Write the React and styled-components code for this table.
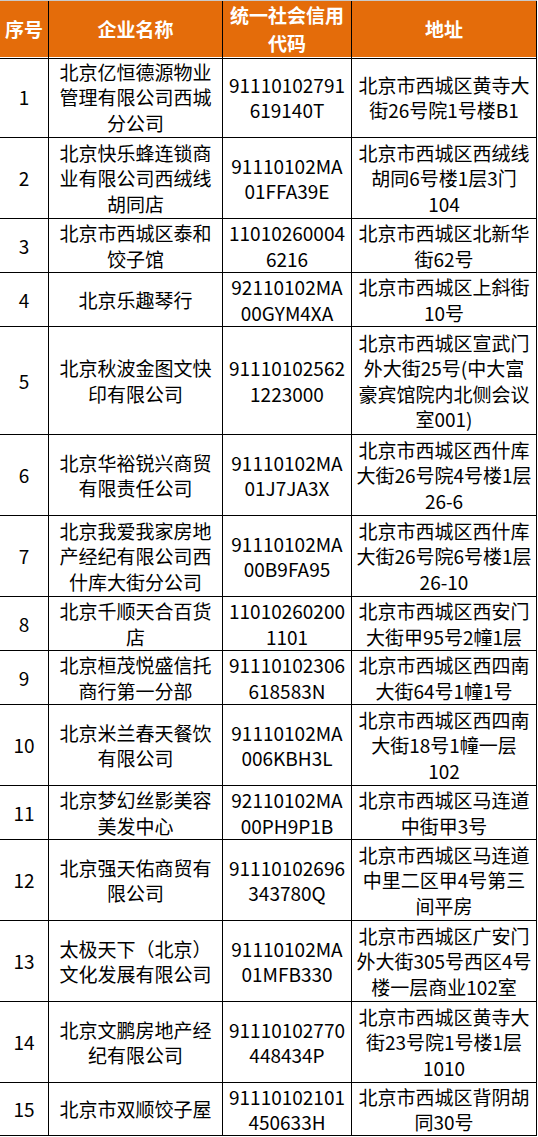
import React from 'react'
import styled, { createGlobalStyle } from 'styled-components'

const GlobalStyle = createGlobalStyle`
  * {
    box-sizing: border-box;
  }
  body {
    margin: 0;
    background: #ffffff;
    font-family: "Noto Sans CJK SC", "Noto Sans", sans-serif;
  }
`

const COLUMNS = '49px 174px 129px 185px'
const LINE = 27

const rows = [
  { no: '1', name: '北京亿恒德源物业\n管理有限公司西城\n分公司', code: '91110102791\n619140T', addr: '北京市西城区黄寺大\n街26号院1号楼B1', lines: 3 },
  { no: '2', name: '北京快乐蜂连锁商\n业有限公司西绒线\n胡同店', code: '91110102MA\n01FFA39E', addr: '北京市西城区西绒线\n胡同6号楼1层3门\n104', lines: 3 },
  { no: '3', name: '北京市西城区泰和\n饺子馆', code: '11010260004\n6216', addr: '北京市西城区北新华\n街62号', lines: 2 },
  { no: '4', name: '北京乐趣琴行', code: '92110102MA\n00GYM4XA', addr: '北京市西城区上斜街\n10号', lines: 2 },
  { no: '5', name: '北京秋波金图文快\n印有限公司', code: '91110102562\n1223000', addr: '北京市西城区宣武门\n外大街25号(中大富\n豪宾馆院内北侧会议\n室001)', lines: 4 },
  { no: '6', name: '北京华裕锐兴商贸\n有限责任公司', code: '91110102MA\n01J7JA3X', addr: '北京市西城区西什库\n大街26号院4号楼1层\n26-6', lines: 3 },
  { no: '7', name: '北京我爱我家房地\n产经纪有限公司西\n什库大街分公司', code: '91110102MA\n00B9FA95', addr: '北京市西城区西什库\n大街26号院6号楼1层\n26-10', lines: 3 },
  { no: '8', name: '北京千顺天合百货\n店', code: '11010260200\n1101', addr: '北京市西城区西安门\n大街甲95号2幢1层', lines: 2 },
  { no: '9', name: '北京桓茂悦盛信托\n商行第一分部', code: '91110102306\n618583N', addr: '北京市西城区西四南\n大街64号1幢1号', lines: 2 },
  { no: '10', name: '北京米兰春天餐饮\n有限公司', code: '91110102MA\n006KBH3L', addr: '北京市西城区西四南\n大街18号1幢一层\n102', lines: 3 },
  { no: '11', name: '北京梦幻丝影美容\n美发中心', code: '92110102MA\n00PH9P1B', addr: '北京市西城区马连道\n中街甲3号', lines: 2 },
  { no: '12', name: '北京强天佑商贸有\n限公司', code: '91110102696\n343780Q', addr: '北京市西城区马连道\n中里二区甲4号第三\n间平房', lines: 3 },
  { no: '13', name: '太极天下（北京）\n文化发展有限公司', code: '91110102MA\n01MFB330', addr: '北京市西城区广安门\n外大街305号西区4号\n楼一层商业102室', lines: 3 },
  { no: '14', name: '北京文鹏房地产经\n纪有限公司', code: '91110102770\n448434P', addr: '北京市西城区黄寺大\n街23号院1号楼1层\n1010', lines: 3 },
  { no: '15', name: '北京市双顺饺子屋', code: '91110102101\n450633H', addr: '北京市西城区背阴胡\n同30号', lines: 2, height: 53 },
]

export default function App() {
  return (
    <>
      <GlobalStyle />
      <Page>
        <Table>
          <HeaderRow>
            <HeadCell>序号</HeadCell>
            <HeadCell>企业名称</HeadCell>
            <HeadCell>{'统一社会信用\n代码'}</HeadCell>
            <HeadCell>地址</HeadCell>
          </HeaderRow>
          {rows.map(row => (
            <Row key={row.no} height={row.height || row.lines * LINE}>
              <Cell>{row.no}</Cell>
              <Cell>{row.name}</Cell>
              <Cell>{row.code}</Cell>
              <Cell>{row.addr}</Cell>
            </Row>
          ))}
        </Table>
      </Page>
    </>
  )
}

const Page = styled.div`
  width: 538px;
  height: 1137px;
  background: #ffffff;
  overflow: hidden;
`

const Table = styled.div`
  width: 537px;
  display: flex;
  flex-direction: column;
`

const HeaderRow = styled.div`
  display: grid;
  grid-template-columns: ${COLUMNS};
  height: 57px;
  background: #e46c0a;
  border-top: 1px solid #c9c9c9;
`

const HeadCell = styled.div`
  display: flex;
  align-items: center;
  justify-content: center;
  text-align: center;
  white-space: pre-line;
  border-right: 1px solid #000000;
  border-bottom: 1px solid #000000;
  color: #ffffff;
  font-weight: bold;
  font-size: 19px;
  line-height: 28px;
  padding-bottom: 1px;
`

const Row = styled.div`
  display: grid;
  grid-template-columns: ${COLUMNS};
  height: ${props => props.height}px;
`

const Cell = styled.div`
  display: flex;
  align-items: center;
  justify-content: center;
  text-align: center;
  white-space: pre;
  border-right: 1px solid #000000;
  border-bottom: 1px solid #000000;
  color: #000000;
  font-size: 19px;
  line-height: 25.5px;
  overflow: hidden;
`
